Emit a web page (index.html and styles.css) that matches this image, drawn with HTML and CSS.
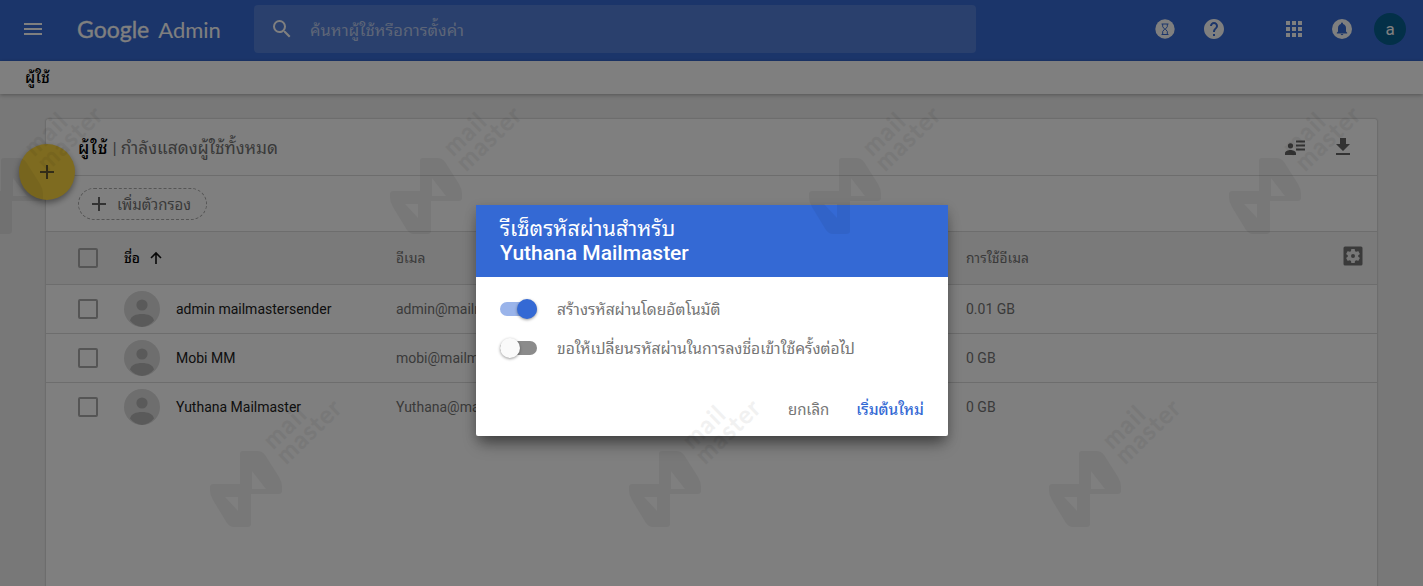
FILE: index.html
```html
<!DOCTYPE html>
<html lang="th">
<head>
  <meta charset="UTF-8">
  <meta name="viewport" content="width=device-width, initial-scale=1.0">
  <title>Google Admin</title>
  <link rel="stylesheet" href="styles.css">
</head>
<body>
  <header class="topbar">
    <svg class="menu-icon" width="24" height="24" viewBox="0 0 24 24"><path d="M3 18h18v-2H3v2zm0-5h18v-2H3v2zm0-7v2h18V6H3z"/></svg>
    <div class="logo"><span class="logo-google">Google</span><span class="logo-admin">Admin</span></div>
    <div class="search">
      <svg width="24" height="24" viewBox="0 0 24 24"><path d="M15.5 14h-.79l-.28-.27A6.47 6.47 0 0 0 16 9.5 6.5 6.5 0 1 0 9.5 16c1.61 0 3.09-.59 4.23-1.57l.27.28v.79l5 4.99L20.49 19l-4.99-5zm-6 0C7.01 14 5 11.99 5 9.5S7.01 5 9.5 5 14 7.01 14 9.5 11.99 14 9.5 14z"/></svg>
      <span class="search-text">ค้นหาผู้ใช้หรือการตั้งค่า</span>
    </div>
    <nav class="actions">
      <svg class="tasks" width="24" height="24" viewBox="0 0 24 24"><circle cx="12" cy="12" r="9.7"/><path class="cut-line" d="M8.5 7h7M8.5 17.500h7M9.7 7v2.800l2 2.300-2 2.300V17M14.3 7v2.800l-2 2.300 2 2.300V17"/></svg>
      <svg class="help" width="24" height="24" viewBox="0 0 24 24"><path d="M12 2C6.48 2 2 6.48 2 12s4.48 10 10 10 10-4.48 10-10S17.52 2 12 2zm1 17h-2v-2h2v2zm2.07-7.75l-.9.92C13.45 12.9 13 13.5 13 15h-2v-.5c0-1.1.45-2.1 1.17-2.83l1.24-1.26c.37-.36.59-.86.59-1.41 0-1.1-.9-2-2-2s-2 .9-2 2H8c0-2.21 1.79-4 4-4s4 1.79 4 4c0 .88-.36 1.68-.93 2.25z"/></svg>
      <svg class="apps" width="24" height="24" viewBox="0 0 24 24"><path d="M4 8h4V4H4zm6 12h4v-4h-4zm-6 0h4v-4H4zm0-6h4v-4H4zm6 0h4v-4h-4zm6-10v4h4V4zm-6 4h4V4h-4zm6 6h4v-4h-4zm0 6h4v-4h-4z"/></svg>
      <svg class="bell" width="24" height="24" viewBox="0 0 24 24"><circle cx="12" cy="12" r="10"/><path class="cut" d="M12 18.2c.7 0 1.3-.5 1.3-1.2h-2.6c0 .7.6 1.2 1.3 1.2zm4-3.6V11c0-2-1.2-3.5-3-4v-.4a1 1 0 0 0-2 0V7c-1.800.5-3 2-3 4v3.600l-1.200 1.200v.7h10.400v-.7z"/></svg>
      <span class="account">a</span>
    </nav>
  </header>
  <div class="crumb">ผู้ใช้</div>

  <main class="content">
    <button class="fab"><svg width="24" height="24" viewBox="0 0 24 24"><path d="M19 13h-6v6h-2v-6H5v-2h6V5h2v6h6z"/></svg></button>
    <section class="card">
      <div class="card-head">
        <h1><span class="strong">ผู้ใช้</span><span class="sep">|</span><span class="sub">กำลังแสดงผู้ใช้ทั้งหมด</span></h1>
        <svg class="people" width="24" height="24" viewBox="0 0 24 24"><path d="M13 5.500h9v2h-9zm0 4h9v2h-9zm0 4h9v2h-9zM7.500 8.200a2.600 2.600 0 1 1 0 5.200 2.600 2.600 0 0 1 0-5.200zM2 20v-1.800c0-2 3.500-3.100 5.500-3.100s5.500 1.100 5.500 3.100V20z"/></svg>
        <svg width="24" height="24" viewBox="0 0 24 24"><path d="M19 9h-4V3H9v6H5l7 7zM5 18v2h14v-2z"/></svg>
      </div>
      <div class="filter">
        <span class="chip"><svg width="24" height="24" viewBox="0 0 24 24"><path d="M19 13h-6v6h-2v-6H5v-2h6V5h2v6h6z"/></svg><span class="chip-text">เพิ่มตัวกรอง</span></span>
      </div>
      <div class="row row-head">
        <i class="box"></i>
        <span class="name-head"><b class="col-name">ชื่อ</b><svg width="16" height="16" viewBox="0 0 16 16"><path d="M8 14V3M3 8l5-5 5 5"/></svg></span>
        <span class="col-mail">อีเมล</span>
        <span class="col-usage">การใช้อีเมล</span>
        <svg class="gear" width="24" height="24" viewBox="0 0 24 24"><rect x="2.500" y="2.500" width="19" height="19" rx="1.500"/><path class="gear-cut" d="M17.250 12c0 .230-.020.460-.050.680l1.480 1.160c.130.110.170.300.080.450l-1.400 2.420c-.090.150-.270.210-.430.150l-1.740-.700c-.360.280-.760.510-1.180.690l-.260 1.850c-.030.170-.180.300-.350.300h-2.800c-.170 0-.320-.130-.350-.290l-.260-1.850c-.430-.180-.820-.410-1.180-.690l-1.740.700c-.160.060-.340 0-.430-.150l-1.400-2.420c-.090-.150-.050-.340.080-.450l1.480-1.160c-.030-.230-.050-.460-.050-.690s.020-.460.050-.680l-1.480-1.160c-.130-.110-.170-.300-.080-.450l1.400-2.420c.090-.150.270-.210.430-.150l1.740.700c.360-.280.760-.510 1.180-.690l.260-1.850c.030-.170.180-.300.350-.300h2.800c.170 0 .320.130.350.290l.260 1.850c.430.180.820.410 1.180.690l1.740-.700c.160-.060.340 0 .430.150l1.400 2.420c.090.150.050.340-.080.450l-1.480 1.160c.030.230.050.460.050.690z"/><circle cx="12" cy="12" r="2"/></svg>
      </div>
      <div class="row">
        <i class="box"></i>
        <svg class="avatar" viewBox="0 0 36 36"><use href="#person"/></svg>
        <span class="name">admin mailmastersender</span>
        <span class="mail">admin@mailmastersender.com</span>
        <span class="usage">0.01 GB</span>
      </div>
      <div class="row">
        <i class="box"></i>
        <svg class="avatar" viewBox="0 0 36 36"><use href="#person"/></svg>
        <span class="name">Mobi MM</span>
        <span class="mail">mobi@mailmastersender.com</span>
        <span class="usage">0 GB</span>
      </div>
      <div class="row">
        <i class="box"></i>
        <svg class="avatar" viewBox="0 0 36 36"><use href="#person"/></svg>
        <span class="name">Yuthana Mailmaster</span>
        <span class="mail">Yuthana@mailmastersender.com</span>
        <span class="usage">0 GB</span>
      </div>
    </section>
  </main>

  <div class="overlay">
    <div class="dialog" role="dialog">
      <h2><span class="dialog-title">รีเซ็ตรหัสผ่านสำหรับ</span><span class="dialog-user">Yuthana Mailmaster</span></h2>
      <div class="option"><i class="switch on"></i><span class="option-text">สร้างรหัสผ่านโดยอัตโนมัติ</span></div>
      <div class="option"><i class="switch"></i><span class="option-text">ขอให้เปลี่ยนรหัสผ่านในการลงชื่อเข้าใช้ครั้งต่อไป</span></div>
      <div class="buttons">
        <button class="cancel">ยกเลิก</button>
        <button class="reset">เริ่มต้นใหม่</button>
      </div>
    </div>
  </div>

  <svg class="watermark" width="1423" height="586" viewBox="0 0 1423 586">
    <defs>
      <g id="person"><circle class="av-bg" cx="18" cy="18" r="18"/><circle class="av-fg" cx="18" cy="14" r="5.600"/><path class="av-fg" d="M6 29.500c1-4.500 6-6.500 12-6.500s11 2 12 6.500A18 18 0 0 1 18 36 18 18 0 0 1 6 29.500z"/></g>
      <g id="mark">
        <path fill-rule="evenodd" d="M33 32h14q5 0 8 4l14 22q3 5 3 10v4q0 3-4 3H41v30q0 3-4 3H24q-4 0-7-4L3 81q-3-5-3-10v-3q0-3 4-3h26V35q0-3 3-3zM42 52v18h14zM15 78h13v14z"/>
        <text x="0" y="0" transform="translate(63 31) rotate(-44)" textLength="48">mail</text>
        <text x="0" y="0" transform="translate(76 46) rotate(-44)" textLength="79">master</text>
      </g>
    </defs>
    <use href="#mark" x="-29" y="126"/>
    <use href="#mark" x="390" y="126"/>
    <use href="#mark" x="809" y="126"/>
    <use href="#mark" x="1229" y="126"/>
    <use href="#mark" x="210" y="419"/>
    <use href="#mark" x="629" y="419"/>
    <use href="#mark" x="1049" y="419"/>
  </svg>
</body>
</html>
```
FILE: styles.css
```css
* {
  box-sizing: border-box;
}

body {
  margin: 0;
  height: 586px;
  overflow: hidden;
  background: #f0f0f0;
  font-family: Roboto, "Noto Sans Thai Looped", Loma, "Noto Sans", sans-serif;
  font-size: 14px;
  color: #212121;
}

svg {
  flex: none;
}

button {
  border: 0;
  padding: 0;
  background: none;
  font: inherit;
}

.topbar {
  display: flex;
  align-items: center;
  height: 61px;
  padding: 0 17px 3px 21px;
  background: #376bd5;
  fill: #fff;
}

.logo {
  display: flex;
  align-items: baseline;
  gap: 9px;
  width: 177px;
  margin-left: 32px;
  font: 23px Lato, sans-serif;
  color: #fff;
}

.logo-google {
  -webkit-text-stroke: 0.3px #fff;
}

.logo-admin {
  font-size: 22px;
}

.search {
  display: flex;
  align-items: center;
  width: 722px;
  height: 48px;
  padding-left: 16px;
  border-radius: 4px;
  background: #5480db;
}

.search-text {
  padding-bottom: 2px;
  margin-left: 16px;
  font-size: 16.5px;
  color: #bbcbee;
}

.actions {
  display: flex;
  flex: 1;
  align-items: center;
  justify-content: flex-end;
}

.help {
  margin: 0 56px 0 25px;
}

.bell {
  margin: 0 20px 0 24px;
}

.cut {
  fill: #376bd5;
}

.cut-line {
  fill: none;
  stroke: #376bd5;
}

.account {
  width: 32px;
  height: 32px;
  border-radius: 50%;
  background: #066190;
  color: #fff;
  font-size: 17px;
  line-height: 32px;
  text-align: center;
}

.crumb {
  height: 33px;
  padding-left: 25px;
  background: #fff;
  box-shadow: 0 1px 4px rgba(0, 0, 0, 0.3);
  font-size: 15.5px;
  font-weight: 500;
  line-height: 34px;
  color: #000;
}

.content {
  position: relative;
  padding: 25px 46px 0;
}

.fab {
  position: absolute;
  left: 19px;
  top: 50px;
  display: flex;
  align-items: center;
  justify-content: center;
  width: 56px;
  height: 56px;
  border-radius: 50%;
  background: #fdd641;
  box-shadow: 0 3px 6px rgba(0, 0, 0, 0.4);
  fill: #665a30;
}

.card {
  height: 480px;
  border-radius: 2px;
  background: #fff;
  box-shadow: 0 0 2px rgba(0, 0, 0, 0.35);
}

.card-head {
  display: flex;
  align-items: center;
  height: 57px;
  padding: 0 22px 0 32px;
  border-bottom: 1px solid #dadada;
  fill: #666;
}

.card-head h1 {
  display: flex;
  flex: 1;
  align-items: baseline;
  gap: 4px;
  margin: 0;
  padding-bottom: 3px;
  font-size: 17.2px;
  font-weight: 400;
  color: #757575;
}

.strong {
  color: #000;
  font-weight: 500;
  letter-spacing: 1px;
}

.people {
  margin-right: 24px;
}

.filter {
  height: 56px;
  padding: 12px 32px;
  border-bottom: 1px solid #dadada;
}

.chip {
  display: flex;
  align-items: center;
  width: 129px;
  height: 32px;
  padding-left: 8px;
  border: 1px dashed #aaa;
  border-radius: 16px;
  color: #757575;
  fill: #666;
}

.chip-text {
  padding-bottom: 2px;
  margin-left: 6px;
  font-size: 15px;
}

.row {
  display: grid;
  grid-template-columns: 46px 52px 220px 570px 378px;
  align-items: center;
  height: 49px;
  padding-left: 32px;
  border-bottom: 1px solid #dadada;
  color: #757575;
}

.row:last-child {
  height: 48px;
  border-bottom: 0;
}

.row-head {
  grid-template-columns: 46px 272px 570px 375px 24px;
  height: 53px;
  background: #f5f5f5;
  font-size: 13.8px;
}

.col-mail,
.col-usage,
.col-name {
  padding-bottom: 3px;
}

.box {
  width: 20px;
  height: 20px;
  border: 2px solid #ababab;
  border-radius: 2px;
}

.name-head {
  display: flex;
  align-items: center;
  gap: 8px;
  fill: none;
  stroke: #111;
  stroke-width: 1.6;
}

.name-head b {
  color: #000;
  font-weight: 500;
}

.gear {
  margin-top: -4px;
  fill: #757575;
}

.gear-cut {
  fill: #eee;
}

.avatar {
  width: 36px;
  height: 36px;
}

.av-bg {
  fill: #dcdcdc;
}

.av-fg {
  fill: #b4b4b4;
}

.name {
  color: #212121;
}

.overlay {
  position: absolute;
  inset: 0;
  padding: 205px 0 0 476px;
  background: rgba(0, 0, 0, 0.5);
}

.dialog {
  width: 472px;
  height: 231px;
  border-radius: 0 0 2px 2px;
  background: #fff;
  box-shadow: 0 11px 15px -4px rgba(0, 0, 0, 0.4), 0 4px 12px rgba(0, 0, 0, 0.2);
  color: #757575;
}

.dialog h2 {
  display: flex;
  flex-direction: column;
  height: 72px;
  margin: 0 0 12px;
  padding: 11px 24px 0;
  background: #3469d4;
  color: #fff;
  font-size: 21px;
  font-weight: 500;
  line-height: 25px;
}

.dialog-title {
  font-size: 21.4px;
  font-weight: 400;
}

.option {
  display: flex;
  align-items: center;
  height: 39px;
  padding-left: 24px;
  font-size: 15.6px;
}

.option-text {
  padding-bottom: 3px;
}

.switch {
  display: flex;
  align-items: center;
  width: 37px;
  height: 14px;
  margin-right: 20px;
  border-radius: 7px;
  background: #8b8b8b;
}

.switch::before {
  content: "";
  width: 20px;
  height: 20px;
  border-radius: 50%;
  background: #fafafa;
  box-shadow: 0 1px 3px rgba(0, 0, 0, 0.4);
}

.switch.on {
  justify-content: flex-end;
  background: #9ab4ea;
}

.switch.on::before {
  background: #3469d4;
}

.buttons {
  display: flex;
  justify-content: flex-end;
  gap: 27px;
  height: 36px;
  margin-top: 23px;
  padding-right: 24px;
}

.cancel {
  color: #757575;
  font-size: 15px;
}

.reset {
  color: #3469d4;
  font-size: 15.4px;
  font-weight: 500;
}

.watermark {
  position: absolute;
  left: 0;
  top: 0;
  fill: #000;
  opacity: 0.05;
  font: 24px Lato, sans-serif;
  pointer-events: none;
}

.watermark text {
  stroke: #000;
  stroke-width: 0.8;
}
```
